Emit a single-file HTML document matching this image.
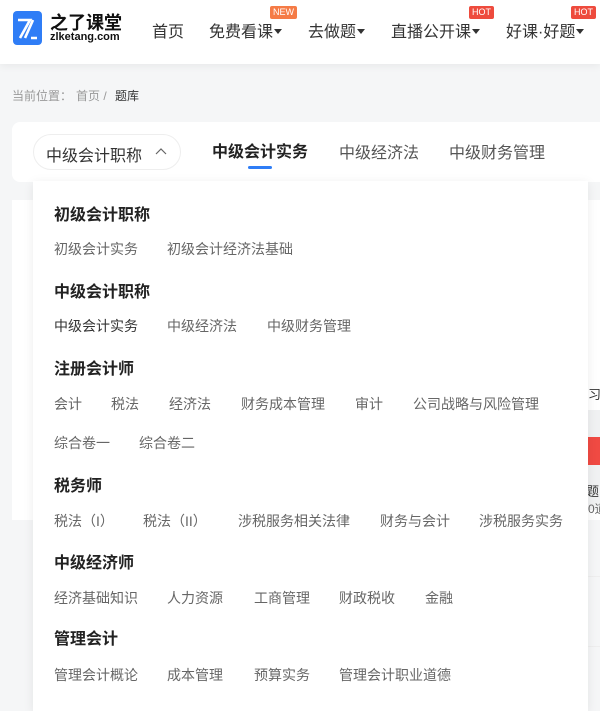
<!DOCTYPE html>
<html><head><meta charset="utf-8"><style>
*{margin:0;padding:0;box-sizing:border-box}
body{width:600px;height:697px;overflow:hidden;background:#f5f6f7;font-family:"Liberation Sans","Noto Sans CJK SC",sans-serif;position:relative;color:#333}
.a{position:absolute;white-space:nowrap}
.hdr{position:absolute;left:0;top:0;width:600px;height:64px;background:#fff;box-shadow:0 2px 8px rgba(0,0,0,.06)}
.nav{font-size:16px;color:#333;top:18px}
.tri{display:inline-block;width:0;height:0;border-left:4px solid transparent;border-right:4px solid transparent;border-top:5px solid #333;vertical-align:middle;margin-left:1px;margin-bottom:2px}
.badge{position:absolute;height:13px;padding:0 3px;font-size:9px;line-height:13px;color:#fff;border-radius:2px;top:6px}
.dd{position:absolute;left:33px;top:181px;width:555px;height:530px;background:#fff;box-shadow:0 2px 10px rgba(0,0,0,.08)}
.h{font-size:16px;font-weight:bold;color:#222;left:54px}
.i{font-size:14px;color:#666}
</style></head><body>
<div class="hdr"></div>
<svg class="a" style="left:13px;top:11px" width="29" height="34" viewBox="0 0 29 34"><rect width="29" height="34" rx="4" fill="#2f7df6"/><path d="M5 9h12L7 27M12 27L20 9M18 27h6" stroke="#fff" stroke-width="2.6" fill="none"/></svg>
<div class="a" style="left:50px;top:9px;font-size:18px;font-weight:bold;color:#111">之了课堂</div>
<div class="a" style="left:50px;top:31px;font-size:11px;font-weight:bold;color:#111">zlketang.com</div>
<div class="a nav" style="left:152px">首页</div>
<div class="a nav" style="left:209px">免费看课<span class="tri"></span></div>
<div class="badge" style="left:270px;background:#f57b46">NEW</div>
<div class="a nav" style="left:308px">去做题<span class="tri"></span></div>
<div class="a nav" style="left:391px">直播公开课<span class="tri"></span></div>
<div class="badge" style="left:469px;background:#ee4b3d">HOT</div>
<div class="a nav" style="left:506px">好课·好题<span class="tri"></span></div>
<div class="badge" style="left:571px;background:#ee4b3d">HOT</div>
<div class="a" style="left:12px;top:87px;font-size:12px;color:#999">当前位置：</div>
<div class="a" style="left:76px;top:87px;font-size:12px;color:#999">首页 /</div>
<div class="a" style="left:115px;top:87px;font-size:12px;color:#333">题库</div>
<div class="a" style="left:12px;top:122px;width:600px;height:60px;background:#fff;border-radius:8px"></div>
<div class="a" style="left:33px;top:134px;width:148px;height:36px;border:1px solid #eee;border-radius:18px;background:#fff"></div>
<div class="a" style="left:46px;top:142px;font-size:16px;color:#333">中级会计职称</div>
<svg class="a" style="left:155px;top:147px" width="12" height="8"><path d="M1 7L6 2L11 7" stroke="#666" stroke-width="1.2" fill="none"/></svg>
<div class="a" style="left:212px;top:138px;font-size:16px;font-weight:bold;color:#222">中级会计实务</div>
<div class="a" style="left:248px;top:166px;width:24px;height:3px;background:#2f7df6;border-radius:2px"></div>
<div class="a" style="left:339px;top:139px;font-size:16px;color:#555">中级经济法</div>
<div class="a" style="left:449px;top:139px;font-size:16px;color:#555">中级财务管理</div>
<div class="a" style="left:12px;top:200px;width:600px;height:320px;background:#fff"></div>
<div class="a" style="left:588px;top:410px;width:12px;height:100px;background:#f0f1f2"></div>
<div class="a" style="left:588px;top:437px;width:12px;height:28px;background:#f04a43"></div>
<div class="a" style="left:588px;top:384px;font-size:13px">习</div>
<div class="a" style="left:586px;top:481px;font-size:13px">题</div>
<div class="a" style="left:588px;top:500px;font-size:12px;color:#666">0道</div>
<div class="a" style="left:588px;top:576px;width:12px;height:1px;background:#eee"></div>
<div class="a" style="left:588px;top:646px;width:12px;height:1px;background:#eee"></div>
<div class="dd"></div>
<div class="a h" style="top:201px">初级会计职称</div>
<div class="a i" style="left:54px;top:239px">初级会计实务</div>
<div class="a i" style="left:167px;top:239px">初级会计经济法基础</div>
<div class="a h" style="top:278px">中级会计职称</div>
<div class="a i" style="left:54px;top:316px;color:#333">中级会计实务</div>
<div class="a i" style="left:167px;top:316px">中级经济法</div>
<div class="a i" style="left:267px;top:316px">中级财务管理</div>
<div class="a h" style="top:355px">注册会计师</div>
<div class="a i" style="left:54px;top:394px">会计</div>
<div class="a i" style="left:111px;top:394px">税法</div>
<div class="a i" style="left:169px;top:394px">经济法</div>
<div class="a i" style="left:241px;top:394px">财务成本管理</div>
<div class="a i" style="left:355px;top:394px">审计</div>
<div class="a i" style="left:413px;top:394px">公司战略与风险管理</div>
<div class="a i" style="left:54px;top:433px">综合卷一</div>
<div class="a i" style="left:139px;top:433px">综合卷二</div>
<div class="a h" style="top:472px">税务师</div>
<div class="a i" style="left:54px;top:511px">税法（I）</div>
<div class="a i" style="left:143px;top:511px">税法（II）</div>
<div class="a i" style="left:238px;top:511px">涉税服务相关法律</div>
<div class="a i" style="left:380px;top:511px">财务与会计</div>
<div class="a i" style="left:479px;top:511px">涉税服务实务</div>
<div class="a h" style="top:549px">中级经济师</div>
<div class="a i" style="left:54px;top:588px">经济基础知识</div>
<div class="a i" style="left:167px;top:588px">人力资源</div>
<div class="a i" style="left:254px;top:588px">工商管理</div>
<div class="a i" style="left:339px;top:588px">财政税收</div>
<div class="a i" style="left:425px;top:588px">金融</div>
<div class="a h" style="top:625px">管理会计</div>
<div class="a i" style="left:54px;top:665px">管理会计概论</div>
<div class="a i" style="left:167px;top:665px">成本管理</div>
<div class="a i" style="left:254px;top:665px">预算实务</div>
<div class="a i" style="left:339px;top:665px">管理会计职业道德</div>
</body></html>
